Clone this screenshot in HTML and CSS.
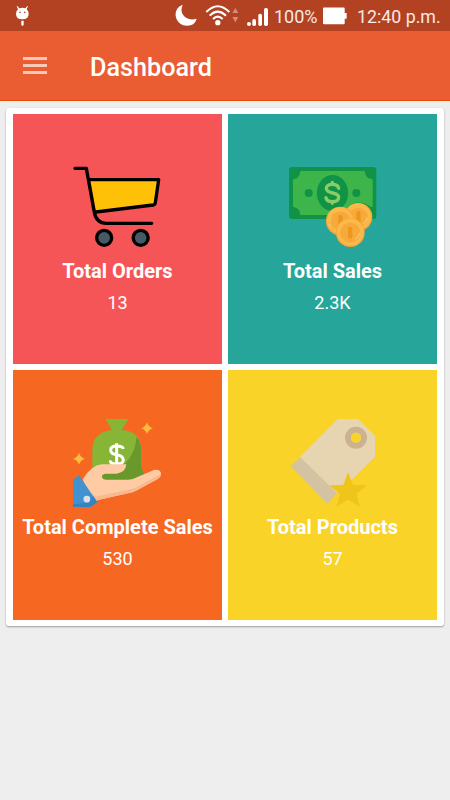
FILE: index.html
```html
<!DOCTYPE html>
<html lang="en">
<head>
<meta charset="utf-8">
<title>Dashboard</title>
<link rel="stylesheet" href="styles.css">
</head>
<body>
<header class="status">
  <svg class="debug" viewBox="0 0 45 66" fill="#fff"><path d="M7 3l6 7q9-4 18 0l6-7 2 1-4 9q6 5 6 13 0 17-19 17T3 26q0-8 6-13L5 4z"/><path d="M19 47h7v13l-3.500 3-3.500-3z"/><circle cx="15" cy="22" r="2.500" fill="#b24222"/><circle cx="29" cy="22" r="2.500" fill="#b24222"/></svg>
  <svg class="tray" viewBox="0 0 327 102" fill="#fff">
    <path d="M53 14C36 20 29 36 33 52c5 21 27 30 46 23 8-3 13-9 16-19-15 5-32 2-40-10-7-10-7-20-2-32z"/>
    <g fill="none" stroke="#fff" stroke-width="6"><path d="M124 36q34-35 69 0M134 47q24-24 49 0M144 57q14-14 29 0"/></g>
    <circle cx="158.500" cy="68" r="8"/>
    <path d="M202 39l9-15 9 15zM202 51h18l-9 16z" fill="#d28e77"/>
    <circle cx="252" cy="72" r="6"/><rect x="262" y="57" width="11" height="21" rx="5"/><rect x="280" y="41" width="11" height="37" rx="5"/><rect x="297" y="24" width="12" height="54" rx="5"/>
  </svg>
  <span class="percent">100%</span>
  <svg class="battery" viewBox="0 0 73 54" fill="#fff"><path d="M3 1h60q3 0 3 3v14h6v17h-6v14q0 3-3 3H3q-3 0-3-3V4q0-3 3-3z"/></svg>
  <span class="clock">12:40 p.m.</span>
</header>
<nav class="bar">
  <div class="menu"><i></i><i></i><i></i></div>
  <h1>Dashboard</h1>
</nav>
<main class="card">
  <section class="tile orders">
    <svg viewBox="0 0 315 300">
      <path d="M76 66H281L271 136Q270 141 264 142L93 162z" fill="#ffc107"/>
      <g fill="none" stroke="#000" stroke-width="10" stroke-linecap="round" stroke-linejoin="round"><path d="M30 31H64L88 163Q94 195 124 196H260"/><path d="M76 65H281L271 134Q270 140 264 141L93 162"/></g>
      <g fill="#455a64" stroke="#000" stroke-width="10"><circle cx="117.500" cy="239.500" r="22.500"/><circle cx="227" cy="239.500" r="22.500"/></g>
    </svg>
    <h2>Total Orders</h2><p>13</p>
  </section>
  <section class="tile sales">
    <svg viewBox="0 0 315 300">
      <rect x="27" y="27" width="262" height="156" rx="9" fill="#109347"/>
      <path d="M61 39H254Q255 62 278 64V146Q255 149 253 171H61Q60 149 39 146V64Q60 61 61 39z" fill="#3db54a"/>
      <path d="M195 171C199 151 213 142 224 134Q256 130 277 150L289 178 280 183H190z" fill="#109347"/>
      <g fill="#109347"><ellipse cx="157.500" cy="105" rx="47" ry="54"/><circle cx="86" cy="105" r="12"/><circle cx="229" cy="105" r="12"/></g>
      <path d="M176 91Q174 79 157 79T139 91Q139 101 158 105T176 119Q175 131 157 131T138 119M157 73V79M157 131V136" fill="none" stroke="#8bcb63" stroke-width="10" stroke-linecap="round"/>
      <g><circle cx="235" cy="177" r="42" fill="#f5a93c"/><circle cx="234" cy="175" r="39" fill="#fcb94a"/><circle cx="235" cy="178" r="29" fill="#f6aa3b"/><rect x="229" y="159" width="13" height="35" rx="5" fill="#ed971e"/><path d="M249 197q12-7 13-19" fill="none" stroke="#ffd27a" stroke-width="3"/></g>
      <g><circle cx="181" cy="189" r="43" fill="#f5a93c"/><circle cx="180" cy="187" r="39" fill="#fcb94a"/><circle cx="181" cy="189" r="29" fill="#f6aa3b"/><rect x="175" y="171" width="13" height="35" rx="5" fill="#ed971e"/></g>
      <g><circle cx="211" cy="224" r="43" fill="#f5a93c"/><circle cx="211" cy="222" r="40" fill="#fcb94a"/><circle cx="211" cy="224" r="30" fill="#f6aa3b"/><rect x="204" y="206" width="13" height="36" rx="5" fill="#ed971e"/><path d="M225 244q12-7 13-19" fill="none" stroke="#ffd27a" stroke-width="3"/></g>
    </svg>
    <h2>Total Sales</h2><p>2.3K</p>
  </section>
  <section class="tile complete">
    <svg viewBox="0 6 315 300">
      <path d="M121 21H191L170 53Q228 58 228 113V151Q228 174 240 188L210 204H110L82 163V112Q83 61 141 53z" fill="#87b536"/>
      <path d="M214 75Q228 88 228 113V151Q228 174 240 188L210 204H114Q107 190 116 184C168 181 211 137 214 75z" fill="#69992c"/>
      <path d="M175 111Q173 102 155 102T137 114 155 128 175 144Q175 156 155 156T136 145M155 94V160" fill="none" stroke="#fff" stroke-width="9"/>
      <path d="M53 202Q82 157 111 157H184Q182 182 154 185H121Q109 187 111 195T124 203H190Q204 203 217 195L267 174Q283 170 288 183 289 193 278 201L213 236Q204 241 189 244L99 264Q91 267 84 277z" fill="#ffcba5"/>
      <path d="M82 242Q87 258 101 252L190 233Q204 231 214 226L288 186Q288 195 278 201L213 236Q204 241 189 244L99 264Q91 267 84 277z" fill="#f7b98d"/>
      <path d="M24 203L42 190 97 271 75 285H24z" fill="#4192d1"/><path d="M85 253L97 271 75 285H24V276Q65 278 85 253z" fill="#3783c2"/>
      <circle cx="65.500" cy="261.500" r="10" fill="#dbe1e7"/>
      <path d="M246 31Q250 45 264 49 250 53 246 67 242 53 228 49 242 45 246 31zM42 122Q46 136 60 140 46 144 42 158 38 144 24 140 38 136 42 122z" fill="#ffbb3c"/>
    </svg>
    <h2>Total Complete Sales</h2><p>530</p>
  </section>
  <section class="tile products">
    <svg viewBox="0 6 315 300">
      <path d="M173 21H235L285 71V134L172 245 60 135z" fill="#e7d5b1"/>
      <path d="M60 136L172 244 142 275 32 163z" fill="#d4c3a3"/>
      <circle cx="228" cy="77.500" r="24" fill="none" stroke="#cbb392" stroke-width="18"/>
      <circle cx="228" cy="77.500" r="15" fill="#f9d327"/>
      <path d="M204 181L219 219 261 220 229 246 240 284 204 263 169 284 180 246 148 220 190 219z" fill="#efc519"/>
    </svg>
    <h2>Total Products</h2><p>57</p>
  </section>
</main>
</body>
</html>
```
FILE: styles.css
```css
* { box-sizing: border-box; }
body { margin: 0; height: 800px; background: #eee; font-family: Roboto, sans-serif; color: #fff; overflow: hidden; }
svg { display: block; flex: none; }
.status { height: 31px; background: #b24222; display: flex; align-items: flex-start; line-height: 34px; white-space: nowrap; }
.debug { width: 15px; height: 22px; margin: 5px 0 0 15px; }
.tray { width: 109px; height: 34px; margin-left: 135px; }
.percent { font-size: 18px; width: 43px; color: #f7e9e5; }
.battery { width: 24px; height: 18px; margin: 7px 0 0 6px; }
.clock { font-size: 17.8px; margin-left: 10px; color: #f7e9e5; }
.bar { height: 70px; background: #ea5d32; border-bottom: 1px solid #ec4c09; display: flex; align-items: center; padding-left: 23px; }
.menu { width: 24px; height: 17px; display: flex; flex-direction: column; justify-content: space-between; }
.menu i { height: 3px; background: #f9c8b9; }
.bar h1 { margin: 5px 0 0 43px; font-size: 25.2px; font-weight: 500; line-height: 32px; }
.card { margin: 7px 6px 0; height: 518px; padding: 6px 7px 6px 7px; background: #fff; border-radius: 3px; box-shadow: 0 1px 2px rgba(0,0,0,.35); display: grid; grid-template-columns: 209px 209px; grid-template-rows: 250px 250px; gap: 6px; }
.tile { display: flex; flex-direction: column; align-items: center; padding-top: 44px; white-space: nowrap; }
.tile svg { width: 105px; height: 100px; }
.tile h2 { margin: 0; font-size: 20px; font-weight: 700; line-height: 26px; }
.tile p { margin: 7px 0 0; font-size: 18px; line-height: 24px; }
.orders { background: #f65557; }
.sales { background: #26a69a; }
.complete { background: #f66722; }
.products { background: #f9d327; }
```
